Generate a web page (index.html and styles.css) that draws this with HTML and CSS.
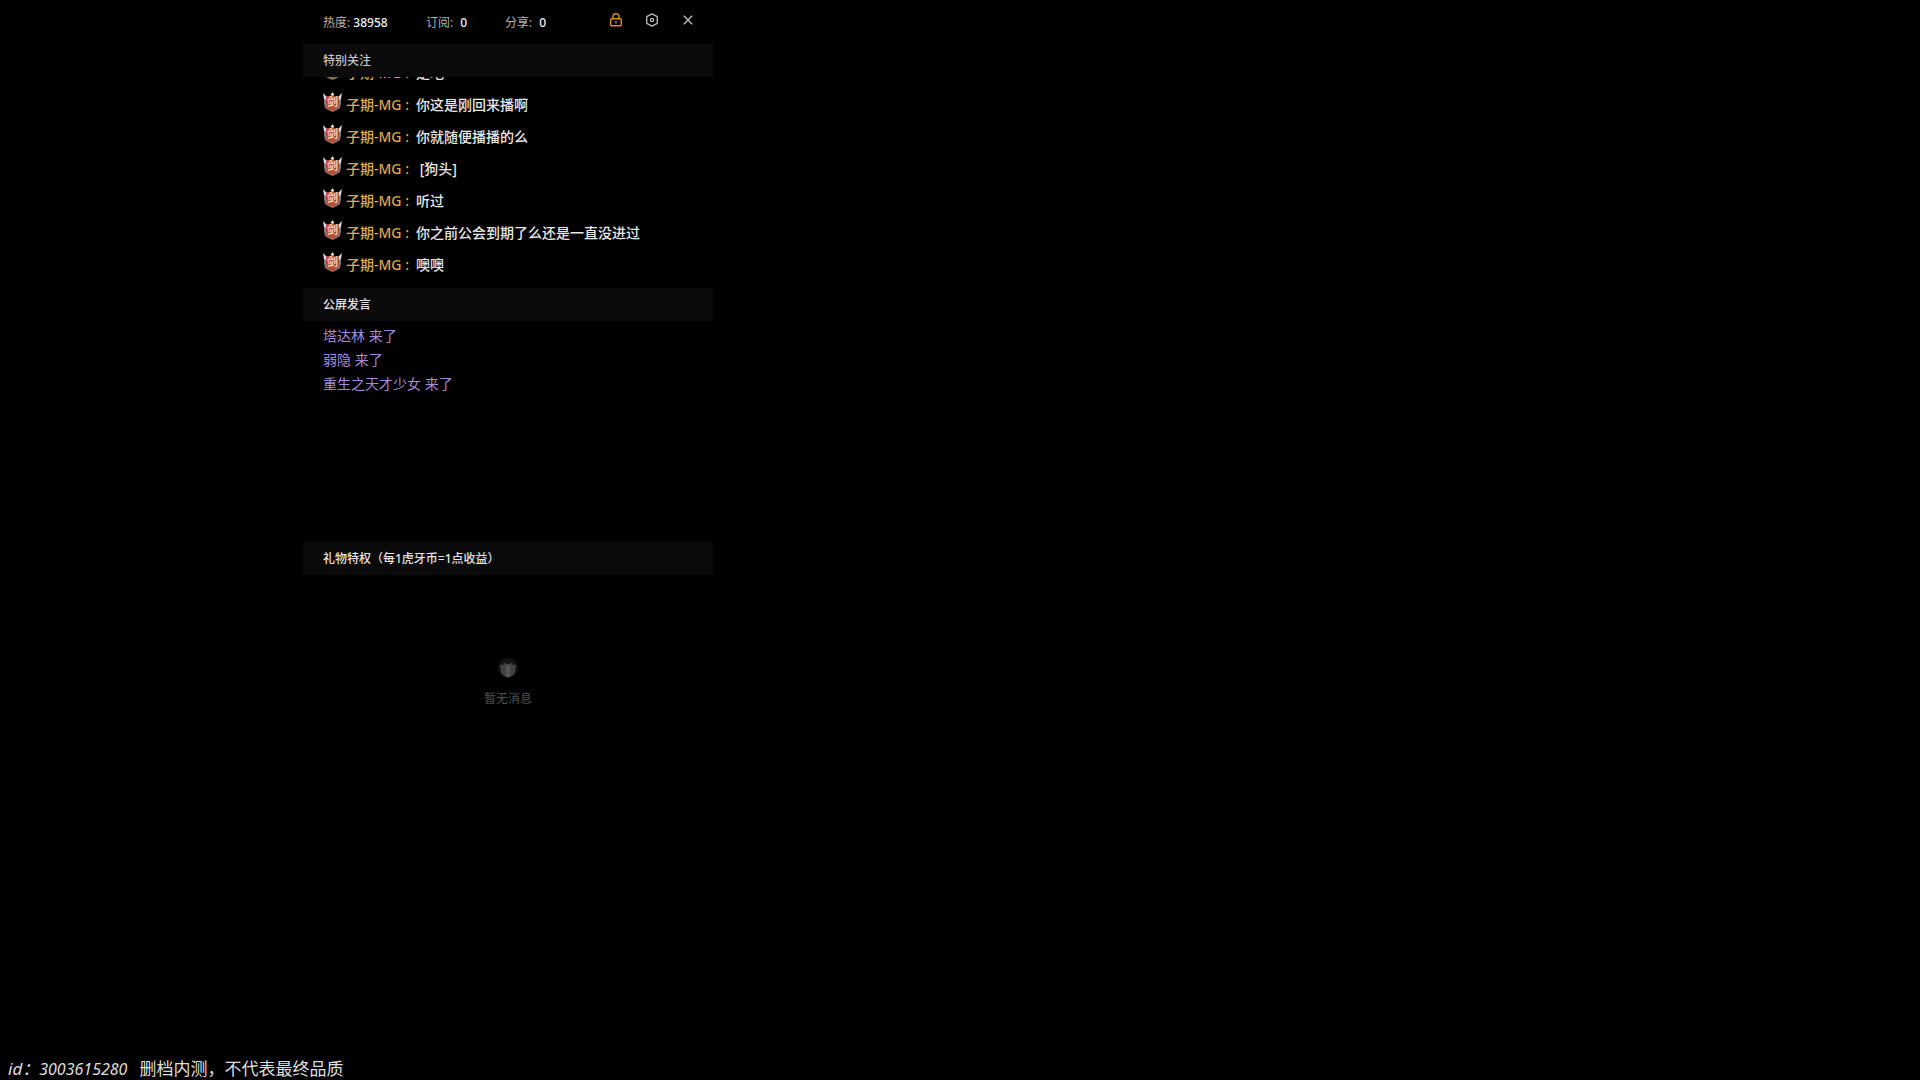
FILE: index.html
```
<!DOCTYPE html>
<html lang="zh-CN">
<head>
    <meta charset="UTF-8">
    <meta name="viewport" content="width=device-width, initial-scale=1.0">
    <title>直播消息</title>
    <link rel="stylesheet" href="styles.css">
</head>
<body>
    <svg width="0" height="0" class="sprite">
        <symbol id="badge" viewBox="0 0 19 20">
            <path d="M1 4h17v7l-1 5-3 2-4.500 2-4.500-2-3-2-1-5z" fill="#7f787e"/>
            <path d="M0 1l3 3v4l-2-1zM19 1l-3 3v4l2-1zM9.500 0l2 3-2 1-2-1z" fill="#ddd8dc"/>
            <path d="M4 4h11l1 2v9l-2 2-4.500 2-4.500-2-2-2V6z" fill="#b94f36"/>
        </symbol>
    </svg>

    <main class="panel">
        <header class="header">
            <div class="stats">
                <span class="stat heat">热度: <b>38958</b></span>
                <span class="stat">订阅: <b>0</b></span>
                <span class="stat">分享: <b>0</b></span>
            </div>
            <div class="tools">
                <button class="tool lock" aria-label="锁定">
                    <svg width="14" height="14" viewBox="0 0 14 14" fill="none" stroke="currentColor" stroke-width="1.4">
                        <rect x="1.7" y="5.7" width="10.6" height="7.1" rx="1"/>
                        <path d="M4 5.500V3.800a3 3 0 0 1 6 0v1.700M7 8v2.400"/>
                    </svg>
                </button>
                <button class="tool" aria-label="设置">
                    <svg width="14" height="14" viewBox="0 0 14 14" fill="none" stroke="currentColor" stroke-width="1.4">
                        <path d="M7 .9l5.300 2.800v6.600L7 13.100l-5.300-2.800V3.700z" stroke-linejoin="round"/>
                        <circle cx="7" cy="7" r="1.6"/>
                    </svg>
                </button>
                <button class="tool" aria-label="关闭">
                    <svg width="14" height="14" viewBox="0 0 14 14" fill="none" stroke="currentColor" stroke-width="1.5">
                        <path d="M2.800 2.800l8.400 8.400M11.200 2.800l-8.400 8.400"/>
                    </svg>
                </button>
            </div>
        </header>

        <h2 class="title follow">特别关注</h2>
        <ul class="messages">
            <li><span class="badge"><svg><use href="#badge"/></svg><i>剑</i></span><span class="name">子期-MG :</span><span>是吧</span></li>
            <li><span class="badge"><svg><use href="#badge"/></svg><i>剑</i></span><span class="name">子期-MG :</span><span>你这是刚回来播啊</span></li>
            <li><span class="badge"><svg><use href="#badge"/></svg><i>剑</i></span><span class="name">子期-MG :</span><span>你就随便播播的么</span></li>
            <li><span class="badge"><svg><use href="#badge"/></svg><i>剑</i></span><span class="name">子期-MG :</span><span>&nbsp;[狗头]</span></li>
            <li><span class="badge"><svg><use href="#badge"/></svg><i>剑</i></span><span class="name">子期-MG :</span><span>听过</span></li>
            <li><span class="badge"><svg><use href="#badge"/></svg><i>剑</i></span><span class="name">子期-MG :</span><span>你之前公会到期了么还是一直没进过</span></li>
            <li><span class="badge"><svg><use href="#badge"/></svg><i>剑</i></span><span class="name">子期-MG :</span><span>噢噢</span></li>
        </ul>

        <h2 class="title">公屏发言</h2>
        <ul class="visitors">
            <li>塔达林 来了</li>
            <li>弱隐 来了</li>
            <li>重生之天才少女 来了</li>
        </ul>

        <h2 class="title">礼物特权（每1虎牙币=1点收益）</h2>
        <div class="empty">
            <svg width="20" height="20" viewBox="0 0 20 20">
                <circle cx="10" cy="10" r="10" fill="#141414"/>
                <path d="M2 7l4-.5L5.500 5.500 7 5l3 1.500L13 5l1.500.5-.5 1 4 .5v3h-1v5q-3 4-7 4t-7-4v-5H2z" fill="#404040"/>
                <path d="M8 7h4v12H8z" fill="#555"/>
            </svg>
            <p>暂无消息</p>
        </div>
    </main>

    <footer class="footer">
        <span class="uid">id：<span class="digits">3003615280</span></span>
        <span>删档内测，不代表最终品质</span>
    </footer>
</body>
</html>
```
FILE: styles.css
```
* {
    box-sizing: border-box;
}
body {
    margin: 0;
    min-height: 100vh;
    display: flex;
    flex-direction: column;
    justify-content: space-between;
    background: #000;
    color: #e8e8e8;
    font-family: "Noto Sans", "Noto Sans CJK SC", sans-serif;
    font-size: 14px;
}
ul, p, h2 {
    margin: 0;
    padding: 0;
    list-style: none;
}
.sprite {
    position: absolute;
}
.panel {
    width: 410px;
    margin-left: 303px;
}
.header {
    display: flex;
    justify-content: space-between;
    height: 44px;
    padding: 0 18px 0 20px;
}
.stats {
    display: flex;
    font-size: 12px;
    line-height: 46px;
    color: #b0b0b0;
}
.stat {
    width: 79px;
    white-space: pre;
}
.stat b {
    margin-left: 4px;
    font-weight: 500;
    color: #f0f0f0;
}
.heat {
    width: 103px;
}
.heat b {
    margin-left: 0;
}
.tools {
    display: flex;
    align-items: center;
    gap: 22px;
    height: 40px;
}
.tool {
    display: flex;
    padding: 0;
    border: none;
    background: none;
    color: #b4b4b4;
    cursor: pointer;
}
.lock {
    color: #d98a26;
}
.title {
    padding-left: 20px;
    background: #0a0a0a;
    color: #e4e4e4;
    font-size: 12px;
    font-weight: 500;
    line-height: 33px;
}
.follow {
    color: #c4c4c4;
}
.messages {
    display: flex;
    flex-direction: column;
    justify-content: flex-end;
    height: 211px;
    padding: 0 20px 7px;
    overflow: hidden;
}
.messages li {
    display: flex;
    flex-shrink: 0;
    height: 32px;
    line-height: 32px;
    font-weight: 500;
    white-space: nowrap;
}
.badge {
    display: grid;
    place-items: center;
    width: 19px;
    height: 20px;
    margin: 3px 4px 0 0;
}
.badge svg,
.badge i {
    grid-area: 1 / 1;
}
.badge svg {
    width: 19px;
    height: 20px;
}
.badge i {
    color: #ffe2d2;
    font-size: 11px;
    font-style: normal;
    line-height: 20px;
}
.name {
    width: 70px;
    color: #dcaa50;
}
.visitors {
    height: 221px;
    padding: 3px 20px;
    color: #a08cdc;
    line-height: 24px;
}
.empty {
    display: flex;
    flex-direction: column;
    align-items: center;
    gap: 11px;
    padding-top: 83px;
    color: #505050;
    font-size: 12px;
    line-height: 20px;
}
.footer {
    display: flex;
    gap: 12px;
    padding: 0 8px;
    font-size: 17px;
    line-height: 22px;
    color: #ddd;
}
.uid {
    font-style: italic;
}
.digits {
    font-size: 16px;
}
```
